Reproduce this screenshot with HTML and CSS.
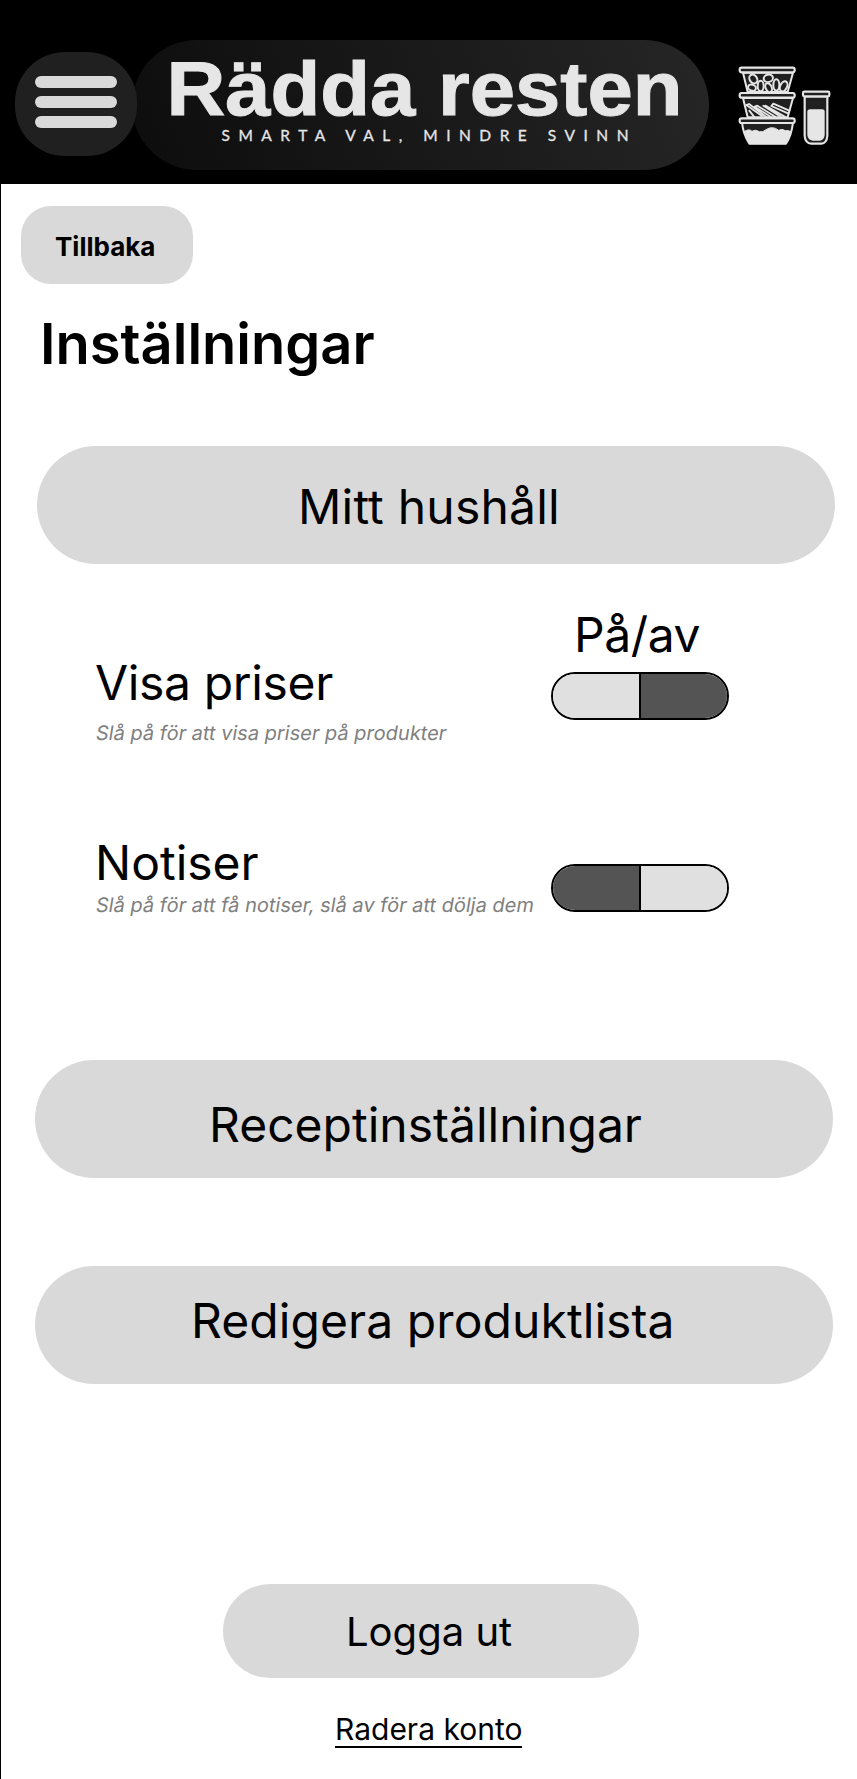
FILE: index.html
```html
<!DOCTYPE html>
<html lang="sv">
<head>
<meta charset="utf-8">
<title>Rädda resten – Inställningar</title>
<link rel="stylesheet" href="styles.css">
</head>
<body>
<header class="header">
  <button class="menu" aria-label="Meny">
    <span class="menu-bar"></span><span class="menu-bar"></span><span class="menu-bar"></span>
  </button>
  <div class="logo">
    <svg class="logo-text" width="577" height="130" viewBox="132 40 577 130">
      <text class="logo-name" x="166.500" y="114.500" textLength="516" lengthAdjust="spacingAndGlyphs">Rädda resten</text>
      <text class="logo-tag" x="221.500" y="141" textLength="407">SMARTA VAL, MINDRE SVINN</text>
    </svg>
  </div>
  <svg class="boxes" width="110" height="95" viewBox="0 0 330 285">
    <g fill="#202020" stroke="#e6e6e6" stroke-width="6" stroke-linejoin="round" stroke-linecap="round">
      <path d="M39 50 L53 108 H173 L189 50 Z"/>
      <path d="M39 126 L53 184 H173 L189 126 Z"/>
      <path d="M36 200 Q40 236 58 263 H168 Q184 240 189 200 Z"/>
      <g stroke-width="6">
        <ellipse cx="70" cy="69" rx="11" ry="14" transform="rotate(-35 70 69)"/>
        <ellipse cx="115" cy="67" rx="14" ry="11" transform="rotate(-15 115 67)"/>
        <ellipse cx="66" cy="95" rx="12" ry="9" transform="rotate(20 66 95)"/>
        <ellipse cx="92" cy="90" rx="9" ry="16"/>
        <ellipse cx="116" cy="95" rx="9" ry="14" transform="rotate(-25 116 95)"/>
        <ellipse cx="139" cy="87" rx="9" ry="17"/>
        <ellipse cx="161" cy="91" rx="10" ry="16" transform="rotate(25 161 91)"/>
      </g>
      <g fill="none" stroke-width="5.500">
        <path d="M49 147 L96 180 M57 144 L108 182 M49 147 L57 144 M74 152 L82 149 M74 152 L122 182 M82 149 L136 182 M100 149 L152 182 M106 149 L164 182 M124 150 L174 172 M130 143 L178 164 M124 150 L130 143 M58 164 L72 182"/>
      </g>
      <path fill="#e6e6e6" stroke-width="3" d="M44 226 Q58 217 66 226 Q76 219 88 227 Q98 230 108 221 Q128 208 146 223 Q156 217 166 224 Q175 222 182 227 Q177 248 168 263 H58 Q49 248 44 226 Z"/>
      <g stroke-width="6.500">
        <rect x="29" y="35" width="165" height="14" rx="6"/>
        <rect x="29" y="111" width="165" height="14" rx="6"/>
        <rect x="29" y="187" width="165" height="14" rx="6"/>
        <path d="M224 121 V240 Q226 262 244 263 H274 Q290 262 292 240 V121 Z"/>
        <rect x="219" y="107" width="79" height="14" rx="4"/>
      </g>
      <path stroke="none" fill="#e6e6e6" d="M232 165 Q234 159 242 160 H276 Q284 160 284 165 V238 Q282 253 270 254 H248 Q234 253 232 238 Z"/>
    </g>
  </svg>
</header>
<main class="page">
  <button class="back">Tillbaka</button>
  <h1 class="title">Inställningar</h1>
  <button class="card household"><span>Mitt hushåll</span></button>
  <section class="settings">
    <div class="info prices">
      <h2 class="label">Visa priser</h2>
      <p class="hint">Slå på för att visa priser på produkter</p>
    </div>
    <div class="control">
      <div class="label onoff">På/av</div>
      <div class="toggle"><span class="half light"></span><span class="half dark"></span></div>
    </div>
    <div class="info notices">
      <h2 class="label">Notiser</h2>
      <p class="hint">Slå på för att få notiser, slå av för att dölja dem</p>
    </div>
    <div class="control second">
      <div class="toggle"><span class="half dark"></span><span class="half light"></span></div>
    </div>
  </section>
  <button class="card recipes"><span>Receptinställningar</span></button>
  <button class="card products"><span>Redigera produktlista</span></button>
  <button class="logout"><span>Logga ut</span></button>
  <a class="delete">Radera konto</a>
</main>
</body>
</html>
```
FILE: styles.css
```css
* { box-sizing: border-box; }
body {
  margin: 0;
  background: #fff;
  color: #000;
  font-family: Inter, "Liberation Sans", sans-serif;
}
button {
  display: block;
  margin: 0;
  padding: 0;
  border: 0;
  background: #d9d9d9;
  color: #000;
  font: inherit;
  text-align: left;
}
h1, h2, p { margin: 0; }

.header {
  display: flex;
  align-items: flex-start;
  height: 184px;
  background: #000;
}
.menu {
  z-index: 1;
  display: flex;
  flex-direction: column;
  align-items: center;
  gap: 8px;
  width: 122px;
  height: 104px;
  margin: 52px 0 0 15px;
  padding-top: 24px;
  border-radius: 50px;
  background: #202020;
}
.menu-bar {
  width: 82px;
  height: 12px;
  border-radius: 6px;
  background: #d9d9d9;
}
.logo {
  width: 577px;
  height: 130px;
  margin: 40px 0 0 -5px;
  border-radius: 65px;
  background: linear-gradient(70deg, #0d0d0d, #191919 50%, #262626);
}
.logo-text { display: block; }
.logo-name {
  font: bold 75.5px "Liberation Sans", sans-serif;
  fill: #e6e6e6;
  stroke: #e6e6e6;
  stroke-width: 1px;
}
.logo-tag {
  font: 400 15.5px Lato, sans-serif;
  fill: #e6e6e6;
  stroke: #e6e6e6;
  stroke-width: 0.3px;
}
.boxes { margin: 56px 0 0 21px; }

.page {
  display: flex;
  flex-direction: column;
  align-items: flex-start;
  height: 1595px;
  border-left: 1px solid #000;
}
.back {
  width: 172px;
  height: 78px;
  margin: 22px 0 0 20px;
  padding-left: 34px;
  border-radius: 30px;
  font-size: 26px;
  font-weight: 700;
  line-height: 78px;
  padding-top: 2px;
}
.title {
  margin: 26px 0 0 39px;
  font-size: 56px;
  font-weight: 600;
  line-height: 68px;
}
.card {
  width: 798px;
  height: 118px;
  border-radius: 59px;
  font-size: 48px;
  line-height: 58px;
  white-space: nowrap;
}
.card span { display: block; }
.household {
  margin: 68px 0 0 36px;
  padding: 3px 0 0 261px;
  letter-spacing: 0.2px;
}
.recipes { margin: 148px 0 0 34px; padding: 12px 0 0 174px; }
.products {
  margin: 88px 0 0 34px;
  padding: 0 0 8px 156px;
  letter-spacing: 0.08px;
}

.settings {
  display: grid;
  grid-template-columns: 456px 178px;
  grid-template-rows: 156px 192px;
  align-items: start;
  height: 348px;
  margin-left: 94px;
}
.info { white-space: nowrap; }
.label {
  font-size: 48px;
  font-weight: 400;
  line-height: 58px;
}
.prices { padding-top: 90px; }
.prices .label { letter-spacing: -0.35px; }
.prices .hint { margin-top: 9px; }
.notices { padding-top: 114px; }
.notices .hint { margin-top: 1px; }
/* Upright letterforms slanted, so "a" and "f" keep their roman shapes */
.hint {
  color: #808080;
  font-size: 20px;
  line-height: 24px;
  transform: skewX(-9.4deg);
  transform-origin: 0 80%;
}
.control { padding-top: 42px; }
.onoff { padding-left: 23px; letter-spacing: -0.4px; }
.onoff + .toggle { margin-top: 8px; }
.second { padding-top: 144px; }
.toggle {
  display: flex;
  width: 178px;
  height: 48px;
  overflow: hidden;
  border: 2px solid #000;
  border-radius: 24px;
}
.half { flex: 1; }
.half + .half { border-left: 2px solid #000; }
.light { background: #e0e0e0; }
.dark { background: #545454; }

.logout {
  width: 416px;
  height: 94px;
  margin: 200px 0 0 222px;
  padding: 2px 0 0 123px;
  border-radius: 47px;
  font-size: 40px;
  line-height: 92px;
}
.delete {
  margin: 34px 0 0 334px;
  border-bottom: 2px solid #000;
  font-size: 30px;
  line-height: 34px;
}
```
